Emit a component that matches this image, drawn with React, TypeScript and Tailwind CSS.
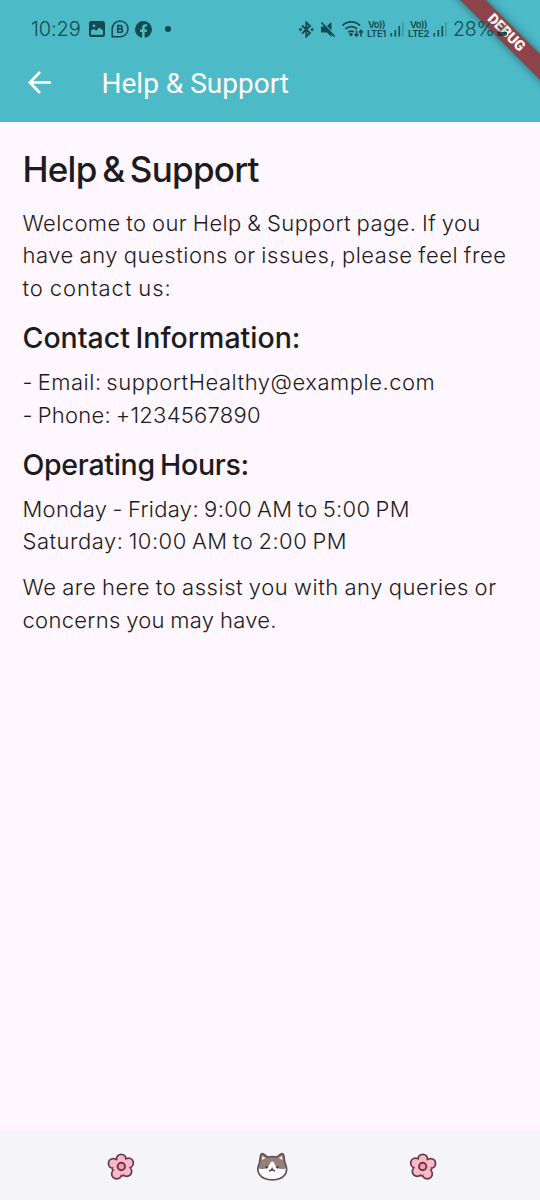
import React from "react";

function Signal() {
  return (
    <svg width="14" height="15" viewBox="0 0 14 15" fill="#124a50">
      <rect x="0.5" y="11" width="1.600" height="3.5" />
      <rect x="4.5" y="8" width="1.600" height="6.5" />
      <rect x="8.500" y="4" width="1.600" height="10.5" />
      <rect x="12.200" y="0" width="1.3" height="14.5" opacity="0.35" />
    </svg>
  );
}

function Lte({ label }: { label: string }) {
  return (
    <div className="flex w-[21px] flex-col items-center text-[9.5px] font-semibold leading-[9px]">
      <span className="tracking-[-0.5px]">Vo))</span>
      <span className="tracking-[-0.4px]">{label}</span>
    </div>
  );
}

function StatusBar() {
  return (
    <div className="relative z-10 flex h-[58px] items-center pl-[31px] text-[#124a50]">
      <span className="w-[58px] whitespace-nowrap text-[20px] font-light tracking-[-0.1px]">10:29</span>
      <svg width="16" height="16" viewBox="0 0 16 16">
        <rect width="16" height="16" rx="2.5" fill="#124a50" />
        <path d="M2 9.500l2.500-1.500 2.800 1.800 3-3.300L14 9.500V13.800H2z" fill="#4dbac7" />
        <circle cx="5" cy="4.8" r="1.4" fill="#4dbac7" />
      </svg>
      <svg className="ml-[6px]" width="18" height="18" viewBox="0 0 18 18" fill="none" stroke="#124a50">
        <path d="M1.200 16.800V9A7.900 7.900 0 1 1 9 16.800z" strokeWidth="1.5" />
        <path d="M6.8 5.6h2.6a1.600 1.600 0 0 1 0 3.300H6.8zm0 3.300h3a1.700 1.700 0 0 1 0 3.400h-3z" strokeWidth="1.6" />
      </svg>
      <svg className="ml-[6px]" width="17" height="17" viewBox="0 0 24 24" fill="#124a50">
        <path d="M24 12a12 12 0 1 0-14 11.8v-8.4H7V12h3V9.4c0-3 1.8-4.7 4.5-4.7 1.3 0 2.7.2 2.7.2v3h-1.5c-1.5 0-2 .9-2 1.9V12h3.4l-.6 3.4h-2.8v8.4A12 12 0 0 0 24 12z" />
      </svg>
      <span className="ml-[13px] size-[6px] rounded-full bg-[#124a50]" />
      <svg className="ml-[128px]" width="15" height="17" viewBox="0 0 15 17" fill="none" stroke="#124a50" strokeWidth="1.8">
        <path d="M3 4.5l8 7.5-3.7 3.5V1.5L11 5 3 12.5" />
        <circle cx="1.5" cy="8.5" r=".6" />
        <circle cx="13.2" cy="8.5" r=".6" />
      </svg>
      <svg className="ml-[6px]" width="17" height="17" viewBox="0 0 17 17" fill="#124a50">
        <path d="M1 5.5h3.5l7 7V16L7 11.5H1z" />
        <path d="M11.5 1v8.5L7 5z" />
        <path d="M1.5 1.5l13 14" stroke="#124a50" strokeWidth="1.8" />
      </svg>
      <svg className="ml-[4px]" width="23" height="18" viewBox="0 0 23 18" fill="none" stroke="#124a50" strokeWidth="1.8">
        <path d="M1.500 5.5a12.500 12.500 0 0 1 17.500 0M4.500 9a8.300 8.300 0 0 1 11.500 0M7.300 12.2a4.6 4.6 0 0 1 5.5-.2" />
        <circle cx="10" cy="14.500" r=".8" fill="#124a50" />
        <path d="M15.500 10.500v5.500M13.500 14l2 2.200 2-2.200M20 16.500v-6M18 12.600l2-2.200 2 2.200" strokeWidth="1.500" />
      </svg>
      <div className="ml-[2px]"><Lte label="LTE1" /></div>
      <div className="ml-[3px]"><Signal /></div>
      <div className="ml-[4px]"><Lte label="LTE2" /></div>
      <div className="ml-[4px]"><Signal /></div>
      <span className="ml-[6px] w-[40px] whitespace-nowrap pt-px text-[19.500px] font-light tracking-[-0.2px]">28%</span>
      <svg width="10" height="15" viewBox="0 0 10 15" className="ml-[4px] shrink-0">
        <rect y="1" width="10" height="13" rx="2.500" fill="#123a40" opacity=".2" />
        <path d="M0 10h10v1.500a2.500 2.500 0 0 1-2.500 2.500h-5A2.500 2.500 0 0 1 0 11.500z" fill="#123a40" opacity=".85" />
      </svg>
    </div>
  );
}

const petals = [
  [15.200, 7, 4.700],
  [22.500, 11, 4.800],
  [7.300, 11.400, 4.800],
  [20.600, 19.300, 5],
  [10.700, 21.800, 5],
];

function Flower({ flip = false }: { flip?: boolean }) {
  return (
    <svg width="30" height="30" viewBox="0 0 30 30" className={flip ? "-scale-x-100" : ""}>
      <path d="M9.500 6.500L20.500 6 25.500 15.500 16.500 25 5.500 17.500z" fill="#633c4d" />
      {petals.map(([x, y, r]) => (
        <circle key={`o${x}`} cx={x} cy={y} r={r + 0.900} fill="#633c4d" />
      ))}
      {petals.map(([x, y, r]) => (
        <circle key={`i${x}`} cx={x} cy={y} r={r - 0.900} fill="#ffb9c6" />
      ))}
      <path d="M10.500 8.200L19.800 7.700 23.700 15 16.200 23.300 7 17z" fill="#ffb9c6" />
      <circle cx="15.300" cy="14.500" r="3.700" fill="#ff9bad" stroke="#633c4d" strokeWidth="2" />
    </svg>
  );
}

const head =
  "M3.400 11L4.600 3.500C5 1.500 6.200 1.300 7.800 2.300L11.500 5q4.700-.8 9.400 0L24.600 2.300C26 1.300 27.400 1.500 27.800 3.500L28.900 11C33.500 20 28.500 27.800 16.300 27.800S-1 20 3.400 11Z";

function Cat() {
  return (
    <svg width="32" height="30" viewBox="0 0 32 30">
      <path d={head} fill="#fff" />
      <path d="M3.400 11L4.600 3.500C5 1.500 6.200 1.300 7.800 2.300L11.500 5q4.700-.8 9.400 0L24.600 2.300C26 1.300 27.400 1.500 27.800 3.500L28.900 11 30.300 16.200Q25 18 21 16C19 14.500 18.500 9.500 16.200 9.500S13.500 14.500 11 16Q7 18 2 16.200Z" fill="#948079" />
      <path d="M5.800 8l.7-4 3 2zM26.500 8l-.7-4-3 2z" fill="#fff0ed" />
      <path d={head} fill="none" stroke="#66505a" strokeWidth="1.700" />
      <circle cx="10.700" cy="15.300" r="1.200" fill="#4b3743" />
      <circle cx="21.500" cy="15.300" r="1.200" fill="#4b3743" />
      <path d="M13.700 18.800q1.900-.3 2.400-1.800.5 1.500 2.400 1.800" fill="none" stroke="#4b3743" strokeWidth="1.500" strokeLinecap="round" />
    </svg>
  );
}

export default function App() {
  return (
    <div className="relative flex h-[1200px] w-[540px] flex-col overflow-hidden bg-[#fef7ff] font-['Inter',sans-serif]">
      <header className="h-[122px] shrink-0 bg-[#4dbac7]">
        <StatusBar />
        <div className="flex h-[50px] items-center pl-[28px]">
          <svg width="24" height="24" viewBox="0 0 24 24" fill="none" stroke="white" strokeWidth="2.700">
            <path d="M23 11.500H2M12 1L1.800 11.500 12 22" />
          </svg>
          <span className="ml-[49.5px] whitespace-nowrap pt-[2px] font-['Roboto',sans-serif] text-[28px] text-white">Help &amp; Support</span>
        </div>
      </header>
      <main className="flex-1 whitespace-nowrap px-[22.5px] pt-[24.500px] text-[22px] font-light leading-[32.4px] text-[#1d1b20] [word-spacing:-1px]">
        <h1 className="text-[35px] font-medium leading-[44px] tracking-[-0.75px] [word-spacing:-3px]">Help &amp; Support</h1>
        <div className="mt-[16.500px]">
          <p className="tracking-[0.4px]">Welcome to our Help &amp; Support page. If you</p>
          <p className="tracking-[0.53px]">have any questions or issues, please feel free</p>
          <p className="tracking-[0.92px]">to contact us:</p>
        </div>
        <h2 className="mt-[15px] text-[28.5px] font-medium leading-[38px] tracking-[0px] [word-spacing:-2px]">Contact Information:</h2>
        <div className="mt-[9px]">
          <p className="tracking-[0.52px] [word-spacing:-2px]">- Email: supportHealthy@example.com</p>
          <p className="tracking-[0.25px] [word-spacing:-1.5px]">- Phone: +1234567890</p>
        </div>
        <h2 className="mt-[14.5px] text-[28.5px] font-medium leading-[38px] tracking-[-0.3px] [word-spacing:-2px]">Operating Hours:</h2>
        <div className="mt-[9px]">
          <p className="tracking-[0.3px] [word-spacing:-1.300px]">Monday - Friday: 9:00 AM to 5:00 PM</p>
          <p className="tracking-[0.5px] [word-spacing:-1.500px]">Saturday: 10:00 AM to 2:00 PM</p>
        </div>
        <div className="mt-[14px]">
          <p className="tracking-[0.54px]">We are here to assist you with any queries or</p>
          <p className="tracking-[0.3px]">concerns you may have.</p>
        </div>
      </main>
      <nav className="flex h-[69px] shrink-0 items-center justify-between bg-[#f5f5f9] pl-[106px] pr-[102px] pt-[2px]">
        <Flower />
        <Cat />
        <Flower flip />
      </nav>
      <div className="absolute left-[419px] top-[24px] flex h-[18px] w-[174px] rotate-45 items-center justify-center bg-[#a8151b]/72 font-['Roboto',sans-serif] text-[14.5px] font-black text-white shadow-[0_0_8px_rgba(0,0,0,0.45)]">
        DEBUG
      </div>
    </div>
  );
}
